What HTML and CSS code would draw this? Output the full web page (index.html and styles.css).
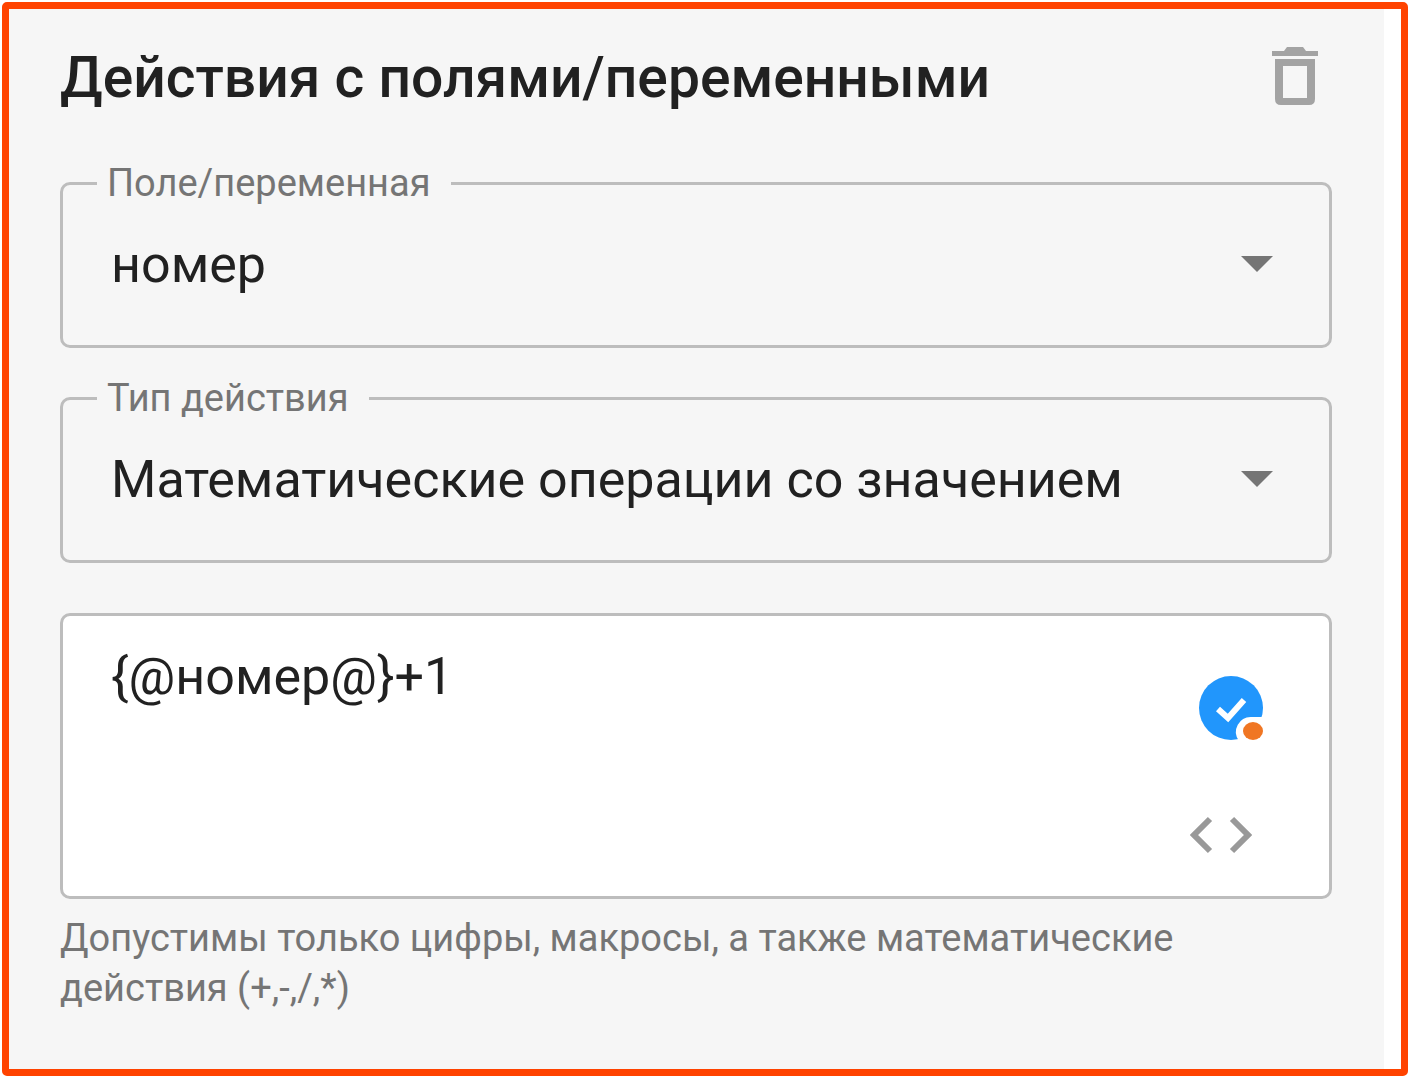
FILE: index.html
```html
<!DOCTYPE html>
<html lang="ru">
<head>
    <meta charset="UTF-8">
    <meta name="viewport" content="width=device-width, initial-scale=1.0">
    <title>Действия с полями/переменными</title>

    <link rel="stylesheet" href="styles.css">
</head>
<body>
    <div class="frame">
        <form class="panel">
            <header class="panel-header">
                <h1>Действия с полями/переменными</h1>
                <button class="icon-button" type="button" aria-label="Удалить">
                    <svg width="74" height="78" viewBox="0 0 74 78" fill="#a3a3a3">
                        <path d="M14 12h12l3-4h16l3 4h12v5H14z"/>
                        <path fill-rule="evenodd" d="M17 20h40v40q0 6-6 6H23q-6 0-6-6zM25 27v32h24V27z"/>
                    </svg>
                </button>
            </header>

            <fieldset class="field">
                <legend><label for="field-name">Поле/переменная</label></legend>
                <div class="select-row">
                    <select id="field-name">
                        <option>номер</option>
                    </select>
                    <svg class="arrow" width="32" height="16" viewBox="0 0 32 16"><path d="M0 0h32L16 16z"/></svg>
                </div>
            </fieldset>

            <fieldset class="field">
                <legend><label for="action-type">Тип действия</label></legend>
                <div class="select-row">
                    <select id="action-type">
                        <option>Математические операции со значением</option>
                    </select>
                    <svg class="arrow" width="32" height="16" viewBox="0 0 32 16"><path d="M0 0h32L16 16z"/></svg>
                </div>
            </fieldset>

            <div class="editor">
                <textarea id="expression" aria-label="Выражение" aria-describedby="expression-hint" spellcheck="false">{@номер@}+1</textarea>
                <div class="editor-tools">
                    <button class="icon-button" type="button" aria-label="Проверить">
                        <svg width="66" height="66" viewBox="0 0 66 66">
                            <circle cx="32" cy="32" r="32" fill="#2196fc"/>
                            <path d="M19 33l10 9 16-18" fill="none" stroke="#fff" stroke-width="6"/>
                            <path d="M66 41H53a15 15 0 0 0-13 24h26z" fill="#fff"/>
                            <ellipse cx="54" cy="55" rx="10" ry="9" fill="#f07623"/>
                        </svg>
                    </button>
                    <button class="icon-button code" type="button" aria-label="Вставить макрос">
                        <svg width="62" height="38" viewBox="0 0 62 38" fill="none" stroke="#999" stroke-width="6">
                            <path d="M20 3L4 19l16 16M42 3l16 16-16 16"/>
                        </svg>
                    </button>
                </div>
            </div>
            <p class="hint" id="expression-hint">Допустимы только цифры, макросы, а также математические действия (+,-,/,*)</p>
        </form>
    </div>
</body>
</html>
```
FILE: styles.css
```css
* {
    box-sizing: border-box;
}

body {
    margin: 0;
    padding: 2px 8px 5px 2px;
    font-family: Roboto, sans-serif;
    color: #212121;
    background-color: white;
}

.frame {
    display: flex;
    min-height: calc(100vh - 7px);
    padding-right: 17px;
    border: 7px solid #ff4300;
    border-radius: 5px;
    background-color: white;
}

.panel {
    flex: 1;
    min-width: 0;
    padding: 30px 52px 30px 51px;
    background-color: #f6f6f6;
}

.panel-header {
    display: flex;
    align-items: center;
    justify-content: space-between;
    height: 78px;
    margin-bottom: 46px;
}

h1 {
    margin: 0;
    font-size: 57px;
    font-weight: 500;
    line-height: 78px;
}

.icon-button {
    display: flex;
    padding: 0;
    border: 0;
    background: none;
    cursor: pointer;
}

.field {
    min-width: 0;
    margin: 0 0 30px;
    padding: 0 56px 20px 34px;
    border: 3px solid #bdbdbd;
    border-radius: 10px;
}

legend {
    padding: 0 20px 0 10px;
    font-size: 38px;
    line-height: 40px;
    color: #757575;
}

.select-row {
    display: flex;
    align-items: center;
    padding-left: 14px;
}

select {
    flex: 1;
    min-width: 0;
    height: 122px;
    padding: 0;
    border: 0;
    appearance: none;
    font-family: inherit;
    font-size: 52px;
    color: inherit;
    background: none;
}

.arrow {
    fill: #757575;
}

.editor {
    display: flex;
    height: 286px;
    margin-top: 50px;
    padding: 28px 64px 28px 48px;
    border: 3px solid #bdbdbd;
    border-radius: 10px;
    background-color: white;
}

textarea {
    flex: 1;
    min-width: 0;
    padding: 0;
    border: 0;
    outline: 0;
    resize: none;
    font-family: inherit;
    font-size: 52px;
    line-height: 66px;
    color: inherit;
    background: none;
}

.editor-tools {
    display: flex;
    flex-direction: column;
    align-items: flex-end;
    gap: 74px;
    padding-top: 32px;
}

.code {
    padding-right: 13px;
}

.hint {
    margin: 14px 0 0;
    font-size: 38px;
    line-height: 50px;
    color: #757575;
}
```
